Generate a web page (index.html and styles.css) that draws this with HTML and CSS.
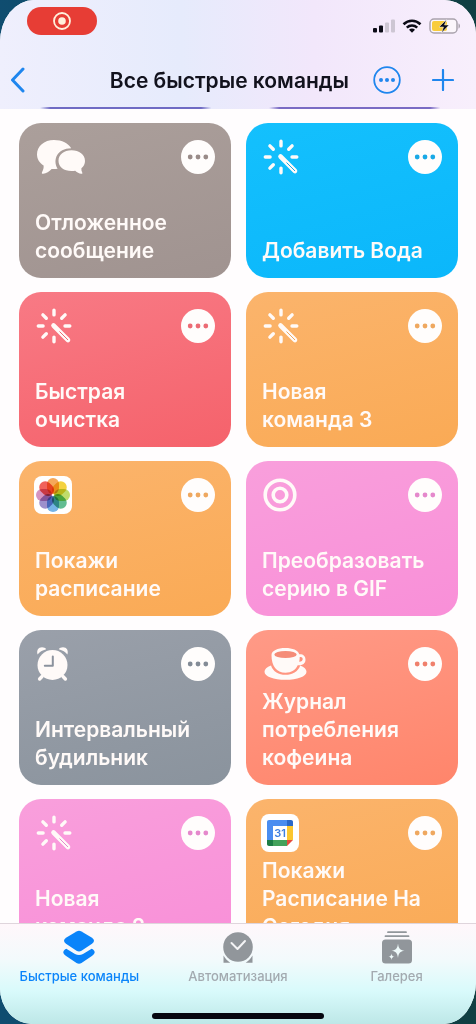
FILE: index.html
```
<!DOCTYPE html>
<html lang="ru">
<head>
  <meta charset="UTF-8">
  <meta name="viewport" content="width=device-width, initial-scale=1.0">
  <title>Все быстрые команды</title>
  <link rel="stylesheet" href="styles.css">
</head>
<body>
  <!-- Shared icons -->
  <svg class="sprite" aria-hidden="true">
    <symbol id="wand" viewBox="0 0 36 36">
      <g fill="none" stroke="currentColor" stroke-width="3.4" stroke-linecap="round">
        <path d="M18 2.300v4.600M18 29.100v4.600M2.300 18h4.800M29 18h4.800M6.900 6.900l3.400 3.400M29.100 6.900l-3.400 3.400M6.900 29.100l3.400-3.400"/>
        <path d="M17.500 17.500L32 32" stroke-width="4.6"/>
      </g>
      <path class="wand-line" d="M23.500 23.500L32 32" fill="none" stroke-width="1"/>
    </symbol>
    <symbol id="dots" viewBox="0 0 34 34">
      <circle cx="9.200" cy="17" r="2.400"/><circle cx="17" cy="17" r="2.400"/><circle cx="24.800" cy="17" r="2.400"/>
    </symbol>
  </svg>

  <div class="phone">
    <!-- Header -->
    <header class="header">
      <div class="status">
        <button class="record" aria-label="Идёт запись экрана">
          <svg width="20" height="20" viewBox="0 0 20 20"><circle cx="10" cy="10" r="8" fill="none" stroke="#fff0dc" stroke-width="1.8"/><circle cx="10" cy="10" r="3.8" fill="#fff0dc"/></svg>
        </button>
        <div class="status-icons">
          <svg width="23" height="14" viewBox="0 0 23 14"><g fill="#0b0b16"><rect x="1" y="9" width="4" height="4.5" rx="1"/><rect x="7" y="6.5" width="4" height="7" rx="1"/></g><g fill="#cdc6d3"><rect x="13" y="3.5" width="4" height="10" rx="1"/><rect x="19" y="0.5" width="4" height="13" rx="1"/></g></svg>
          <svg width="20" height="14" viewBox="0 0 20 14"><path d="M1.500 5.200C6.500.6 13.500.6 18.500 5.200M4.800 8.600C7.800 5.800 12.200 5.800 15.200 8.600" fill="none" stroke="#0b0b16" stroke-width="2.600"/><path d="M7 10.800c1.800-1.700 4.200-1.700 6 0l-3 3z" fill="#0b0b16"/></svg>
          <svg width="32" height="16" viewBox="0 0 32 16"><rect x="1" y="1" width="27" height="14" rx="4" fill="#fbf6fb" stroke="#aaa3ad" stroke-width="1.500"/><rect x="3" y="3" width="15" height="10" rx="2" fill="#f8cc3c"/><path d="M29.500 5.500c2 .6 2 4.400 0 5z" fill="#aaa3ad"/><path d="M17.500 1.500L10 9h4.500l-2 6L20 7h-4.500z" fill="#0b0b16" stroke="#fbf6fb" stroke-width=".5"/></svg>
        </div>
      </div>
      <nav class="navbar">
        <button class="icon-button back" aria-label="Назад">
          <svg width="16" height="26" viewBox="0 0 16 26"><path d="M13 2L2.500 13 13 24" fill="none" stroke="currentColor" stroke-width="3" stroke-linecap="round" stroke-linejoin="round"/></svg>
        </button>
        <h1>Все быстрые команды</h1>
        <button class="icon-button more" aria-label="Ещё">
          <svg width="28" height="28" viewBox="0 0 28 28"><circle cx="14" cy="14" r="12.800" fill="none" stroke="currentColor" stroke-width="1.800"/><g fill="currentColor"><circle cx="8" cy="14" r="2"/><circle cx="14" cy="14" r="2"/><circle cx="20" cy="14" r="2"/></g></svg>
        </button>
        <button class="icon-button" aria-label="Добавить">
          <svg width="22" height="22" viewBox="0 0 22 22"><path d="M11 1v20M1 11h20" fill="none" stroke="currentColor" stroke-width="2.200" stroke-linecap="round"/></svg>
        </button>
      </nav>
    </header>

    <!-- Shortcuts -->
    <main class="grid">
      <article class="card taupe">
        <div class="card-top">
          <svg class="icon-wide" viewBox="0 0 50 36"><path d="M18 1C8 1 1 7.300 1 15.300c0 4.800 2.400 8.700 6.600 11.300.3 2.600-.4 4.600-1.600 6.600-.5 1 .2 1.800 1.200 1.600 3-.6 6.200-2.300 8.400-4.900 2.300.3 3.800.2 6-.1C16.500 21 21 9.500 35.200 9.300 32.500 4.300 26 1 18 1z" fill="currentColor"/><path d="M35.500 11.300c-7.600 0-13 4.400-13 10.500s5.400 10.300 13 10.300c1.300 0 2.500-.1 3.700-.4 2 1.700 3.800 2.700 6 3.100 1.100.2 1.500-.6 1-1.400-.7-1.300-1-2.700-.8-4.200 2.400-1.900 3.600-4.400 3.600-7.300 0-6.200-5.800-10.600-13.500-10.600z" fill="currentColor"/></svg>
          <button class="dots" aria-label="Изменить"><svg><use href="#dots"/></svg></button>
        </div>
        <h2>Отложенное сообщение</h2>
      </article>

      <article class="card blue">
        <div class="card-top">
          <svg class="icon"><use href="#wand"/></svg>
          <button class="dots" aria-label="Изменить"><svg><use href="#dots"/></svg></button>
        </div>
        <h2>Добавить Вода</h2>
      </article>

      <article class="card red">
        <div class="card-top">
          <svg class="icon"><use href="#wand"/></svg>
          <button class="dots" aria-label="Изменить"><svg><use href="#dots"/></svg></button>
        </div>
        <h2>Быстрая<br>очистка</h2>
      </article>

      <article class="card orange">
        <div class="card-top">
          <svg class="icon"><use href="#wand"/></svg>
          <button class="dots" aria-label="Изменить"><svg><use href="#dots"/></svg></button>
        </div>
        <h2>Новая<br>команда 3</h2>
      </article>

      <article class="card orange">
        <div class="card-top">
          <!-- Photos -->
          <svg class="app-icon" viewBox="0 0 38 38">
            <rect width="38" height="38" rx="8" fill="#fff"/>
            <g class="petals">
              <rect x="13" y="2" width="12" height="16" rx="6" fill="#f5a85a"/>
              <rect x="13" y="2" width="12" height="16" rx="6" fill="#f4d240" transform="rotate(45 19 19)"/>
              <rect x="13" y="2" width="12" height="16" rx="6" fill="#c0dc6a" transform="rotate(90 19 19)"/>
              <rect x="13" y="2" width="12" height="16" rx="6" fill="#62bd92" transform="rotate(135 19 19)"/>
              <rect x="13" y="2" width="12" height="16" rx="6" fill="#74b4e6" transform="rotate(180 19 19)"/>
              <rect x="13" y="2" width="12" height="16" rx="6" fill="#9d90cc" transform="rotate(225 19 19)"/>
              <rect x="13" y="2" width="12" height="16" rx="6" fill="#d594c0" transform="rotate(270 19 19)"/>
              <rect x="13" y="2" width="12" height="16" rx="6" fill="#f0625a" transform="rotate(315 19 19)"/>
            </g>
          </svg>
          <button class="dots" aria-label="Изменить"><svg><use href="#dots"/></svg></button>
        </div>
        <h2>Покажи расписание</h2>
      </article>

      <article class="card pink">
        <div class="card-top">
          <svg class="icon" viewBox="0 0 36 36"><g fill="none" stroke="currentColor" stroke-width="3.600"><circle cx="17" cy="18" r="14.800"/><circle cx="17" cy="18" r="6.800"/></g></svg>
          <button class="dots" aria-label="Изменить"><svg><use href="#dots"/></svg></button>
        </div>
        <h2>Преобразовать серию в GIF</h2>
      </article>

      <article class="card slate">
        <div class="card-top">
          <svg class="icon" viewBox="0 0 36 36"><g fill="currentColor"><circle cx="16.500" cy="19" r="15"/><path d="M1.600 8.500C.3 4.500 2.300 1.300 6 1.300c2 0 3.400.7 4.200 1.900C6.300 4.200 3.600 6 1.600 8.500zM31.400 8.500c1.300-4-.7-7.200-4.400-7.200-2 0-3.400.7-4.200 1.900 3.900 1 6.600 2.800 8.600 5.300z"/></g><path d="M6 30.500L3.600 33M27 30.500l2.400 2.500" stroke="currentColor" stroke-width="3.400" stroke-linecap="round"/><path d="M16.800 10.500v9.300h-8" fill="none" stroke="#8b929d" stroke-width="2" stroke-linecap="round" stroke-linejoin="round"/></svg>
          <button class="dots" aria-label="Изменить"><svg><use href="#dots"/></svg></button>
        </div>
        <h2>Интервальный будильник</h2>
      </article>

      <article class="card coral">
        <div class="card-top">
          <svg class="icon-wide" viewBox="0 0 50 36"><path d="M8 19.500C3.800 21 1.500 23.200 1.500 25.700c0 4.800 9.200 8.100 21 8.100s21-3.300 21-8.100c0-2.500-2.300-4.700-6.300-6.200-2 6.200-8 9.300-14.700 9.300S10 25.700 8 19.500z" fill="currentColor"/><path d="M8.500 9c0 11 5 17.800 14 17.800 6 0 10-2.800 12.200-7.500 4.600.3 7.800-1.800 7.800-5.600 0-3.700-2.500-5.700-6.200-5.400C35 4.100 29.500 2 22.500 2c-8 0-14 2.700-14 7z" fill="currentColor"/><ellipse cx="22.500" cy="8.500" rx="11.200" ry="3.600" fill="#f58c78"/><path d="M36.700 11c1.800-.4 3 .4 3 2s-1.300 2.800-3.500 2.700c.4-1.500.5-3.100.5-4.700z" fill="#fe917b"/></svg>
          <button class="dots" aria-label="Изменить"><svg><use href="#dots"/></svg></button>
        </div>
        <h2>Журнал потребления кофеина</h2>
      </article>

      <article class="card pink">
        <div class="card-top">
          <svg class="icon"><use href="#wand"/></svg>
          <button class="dots" aria-label="Изменить"><svg><use href="#dots"/></svg></button>
        </div>
        <h2>Новая<br>команда 2</h2>
      </article>

      <article class="card orange">
        <div class="card-top">
          <!-- Google Calendar -->
          <svg class="app-icon" viewBox="0 0 38 38">
            <rect width="38" height="38" rx="8" fill="#fff"/>
            <path d="M8 6h18v6H12v14H6V8c0-1.200.8-2 2-2z" fill="#4a8df0"/>
            <path d="M26 6h4c1.200 0 2 .8 2 2v4h-6z" fill="#2a68c8"/>
            <path d="M26 12h6v14h-6z" fill="#fbc62f"/>
            <path d="M12 26h14v6H12z" fill="#43a25b"/>
            <path d="M6 26h6v6H8c-1.200 0-2-.8-2-2z" fill="#1d7d45"/>
            <path d="M26 26h6l-6 6z" fill="#e54b3b"/>
            <text x="19" y="23" text-anchor="middle" class="day">31</text>
          </svg>
          <button class="dots" aria-label="Изменить"><svg><use href="#dots"/></svg></button>
        </div>
        <h2>Покажи Расписание На Сегодня</h2>
      </article>
    </main>

    <!-- Tab bar -->
    <footer class="tabbar">
      <nav class="tabs">
        <a href="#" class="tab active">
          <svg width="34" height="36" viewBox="0 0 34 36"><path d="M14.500 1.400q2.500-1.300 5 0l10.500 6.300q4 2.900 0 6L19.500 20.800q-2.500 1.400-5 0L4 13.700q-4-3.100 0-6z" fill="currentColor"/><path d="M4.300 18.800c-4.200 2.200-3.800 5 .2 7.500l10 6.800q2.500 1.400 5 0l10-6.800c4-2.500 4.400-5.300.2-7.500l-8.700 5.200q-4 2-8 0z" fill="currentColor"/></svg>
          <span>Быстрые команды</span>
        </a>
        <a href="#" class="tab">
          <svg width="34" height="36" viewBox="0 0 34 36"><circle cx="17" cy="17" r="14.800" fill="currentColor"/><path d="M2.500 25.500c2 3.300 4 5.300 6.800 7.300H2.500zM31.500 25.500c-2 3.300-4 5.300-6.800 7.300h6.800z" fill="currentColor"/><path d="M10.500 13l6 6L24 11" fill="none" stroke="#f4f4f6" stroke-width="2" stroke-linecap="round" stroke-linejoin="round"/></svg>
          <span>Автоматизация</span>
        </a>
        <a href="#" class="tab">
          <svg width="34" height="36" viewBox="0 0 34 36"><rect x="2" y="9.500" width="30" height="24" rx="3.500" fill="currentColor"/><path d="M8 2.200h18M5.500 6.200h23" stroke="currentColor" stroke-width="1.800" stroke-linecap="round"/><path d="M18 13.500c.6 5 2 6.500 6.500 7.200-4.500.7-5.900 2.200-6.500 7.200-.6-5-2-6.500-6.500-7.200 4.500-.7 5.900-2.200 6.500-7.200zM11.500 23.500c.3 2.200 1 2.900 3 3.200-2 .3-2.700 1-3 3.200-.3-2.200-1-2.900-3-3.200 2-.3 2.700-1 3-3.200z" fill="#eefafa"/></svg>
          <span>Галерея</span>
        </a>
      </nav>
      <div class="home-indicator"></div>
    </footer>
  </div>
</body>
</html>
```
FILE: styles.css
```
* {
  box-sizing: border-box;
}
body {
  margin: 0;
  font-family: Inter, "Liberation Sans", sans-serif;
  background: linear-gradient(90deg, #0f4d70, #103f42);
}
button {
  border: none;
  padding: 0;
  cursor: pointer;
}
svg {
  display: block;
  flex: none;
}
.sprite {
  position: absolute;
  width: 0;
  height: 0;
}
.phone {
  display: flex;
  flex-direction: column;
  height: 100vh;
  overflow: hidden;
  border-radius: 34px 32px 32px 32px / 42px 34px 42px 36px;
  background: #fffdfe;
}

/* Header */
.header {
  height: 109px;
  /* bottom edges of the row scrolled under the header */
  background:
    linear-gradient(90deg, transparent, #6f6bc4 6%, #6f6bc4 94%, transparent) 40px 100% / 36% 2px no-repeat,
    linear-gradient(90deg, transparent, #7a6bc4 6%, #7a6bc4 94%, transparent) calc(100% - 36px) 100% / 36% 2px no-repeat,
    linear-gradient(90deg, #efeffd, #e6ebfc 38%, #f2e7fb 66%, #f8effc);
}
.status {
  display: flex;
  justify-content: space-between;
  padding: 7px 15px 0 27px;
}
.record {
  display: flex;
  align-items: center;
  justify-content: center;
  width: 70px;
  height: 28px;
  border-radius: 14px;
  background: #e73d35;
}
.status-icons {
  display: flex;
  align-items: center;
  gap: 7px;
  padding-top: 9px;
}
.navbar {
  display: flex;
  align-items: center;
  justify-content: flex-end;
  height: 54px;
  margin-top: 18px;
  padding: 0 22px 0 10px;
}
.navbar h1 {
  margin: 0 24px 0 0;
  font-size: 21px;
  font-weight: 600;
  color: #12121d;
  white-space: nowrap;
}
.icon-button {
  background: none;
  color: #1f86ee;
}
.back {
  margin-right: auto;
}
.more {
  margin-right: 31px;
}

/* Shortcuts */
.grid {
  flex: 1;
  min-height: 0;
  overflow-y: auto;
  scrollbar-width: none;
  display: grid;
  grid-template-columns: 1fr 1fr;
  grid-auto-rows: 155px;
  gap: 14px 15px;
  padding: 14px 18px 14px 19px;
}
.card {
  display: flex;
  flex-direction: column;
  justify-content: space-between;
  padding: 17px 16px 13px;
  border-radius: 22px;
  color: #fffaf8;
}
.card h2 {
  margin: 0;
  font-size: 21px;
  font-weight: 600;
  line-height: 28px;
}
.card-top {
  display: flex;
  align-items: center;
  justify-content: space-between;
  height: 34px;
}
.icon {
  width: 36px;
  height: 36px;
  margin-left: 1px;
}
.icon-wide {
  width: 50px;
  height: 36px;
  margin-left: 1px;
}
.app-icon {
  width: 38px;
  height: 38px;
  margin-left: -1px;
}
.petals rect {
  mix-blend-mode: multiply;
}
.day {
  font-size: 11px;
  font-weight: 600;
  fill: #3f7fe0;
}
.wand-line {
  stroke: var(--tone);
}
.dots {
  width: 34px;
  height: 34px;
  border-radius: 50%;
  background: #fffdfc;
}
.dots svg {
  width: 34px;
  height: 34px;
  fill: var(--tone);
}
.taupe {
  --tone: #998b88;
  background: linear-gradient(165deg, #ab9f9b, #a09390);
}
.blue {
  --tone: #19a9e6;
  background: linear-gradient(165deg, #14c0fd, #0bb7fb);
}
.red {
  --tone: #ec6b74;
  background: linear-gradient(165deg, #f87a85, #f5626b);
}
.orange {
  --tone: #efa85f;
  background: linear-gradient(165deg, #fbb46c, #faaa55);
}
.pink {
  --tone: #e588cc;
  background: linear-gradient(165deg, #f99fdc, #f98fd8);
}
.slate {
  --tone: #838b96;
  background: linear-gradient(165deg, #9aa0aa, #8a939d);
}
.coral {
  --tone: #f0806c;
  background: linear-gradient(165deg, #ff9a87, #ff856b);
}

/* Tab bar */
.tabbar {
  display: flex;
  flex-direction: column;
  justify-content: space-between;
  align-items: center;
  height: 101px;
  padding: 6px 0 5px;
  border-top: 1px solid #dfd5dc;
  background: linear-gradient(#fff7fb, #f3fafc 35%, #d8fafb 68%, #bde7e7);
}
.tabs {
  display: grid;
  grid-template-columns: repeat(3, 1fr);
  width: 100%;
}
.tab {
  display: flex;
  flex-direction: column;
  align-items: center;
  gap: 2px;
  font-size: 13px;
  font-weight: 500;
  line-height: 16px;
  color: #91969b;
  text-decoration: none;
}
.tab.active {
  color: #0a84fa;
}
.tab:not(.active) span {
  color: #a3aab0;
}
.home-indicator {
  width: 36%;
  height: 6px;
  border-radius: 3px;
  background: #05060f;
}
```
